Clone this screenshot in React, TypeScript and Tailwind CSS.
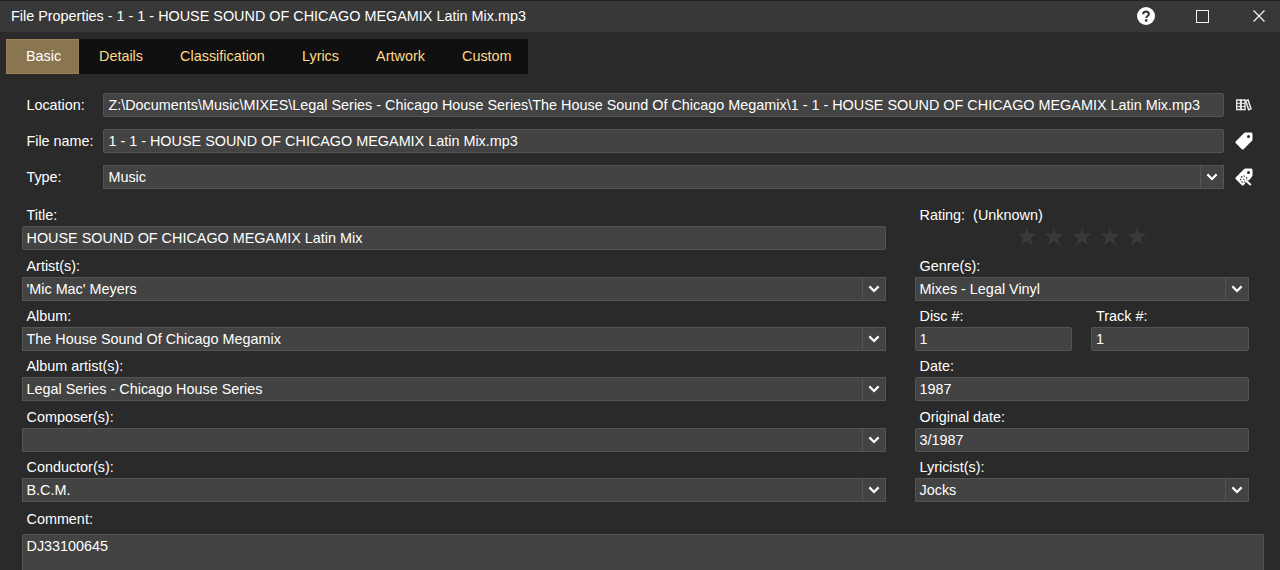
import React from "react";

const tabs = ["Details", "Classification", "Lyrics", "Artwork", "Custom"];

const HelpIcon = () => (
  <svg width="18" height="18" viewBox="0 0 18 18">
    <circle cx="9" cy="9" r="9" fill="#fff" />
    <path
      d="M6.2 7.2C6.2 3.7 11.9 3.7 11.9 7C11.9 8.9 9.2 9 9.2 11"
      fill="none"
      stroke="#333"
      strokeWidth="2"
    />
    <circle cx="9.2" cy="13.4" r="1.3" fill="#333" />
  </svg>
);

const BooksIcon = () => (
  <svg width="16" height="12" viewBox="0 0 16 12" fill="none" stroke="#e6e6e6">
    <rect x="0.7" y="1" width="3.8" height="9.6" strokeWidth="1.5" />
    <rect x="5.2" y="1" width="3.8" height="9.6" strokeWidth="1.5" />
    <path d="M9.8 1.8L12.1 1L15 9.8L12.6 10.7Z" strokeWidth="1.5" />
    <path d="M1 4.4H4M1 7.5H4M6 4.4H9M6 7.5H9" strokeWidth="1" />
  </svg>
);

const TagIcon = () => (
  <svg width="18" height="18" viewBox="0 0 18 18">
    <path
      fillRule="evenodd"
      fill="#fff"
      d="M10.3 0.6H16C16.9 0.6 17.5 1.2 17.5 2.1V7.6Q17.5 8.3 17 8.8L8.8 16.9Q7.7 17.9 6.6 16.9L0.9 11.3Q-0.1 10.2 0.9 9.2L9.1 1.1Q9.6 0.6 10.3 0.6ZM13.5 3A1.5 1.5 0 1 0 13.5 6A1.5 1.5 0 1 0 13.5 3Z"
    />
  </svg>
);

const TagSearchIcon = () => (
  <svg width="18" height="18" viewBox="0 0 18 18">
    <path
      fillRule="evenodd"
      fill="#fff"
      d="M10.3 0.6H16C16.9 0.6 17.5 1.2 17.5 2.1V7.6Q17.5 8.3 17 8.8L8.8 16.9Q7.7 17.9 6.6 16.9L0.9 11.3Q-0.1 10.2 0.9 9.2L9.1 1.1Q9.6 0.6 10.3 0.6ZM13.5 3A1.5 1.5 0 1 0 13.5 6A1.5 1.5 0 1 0 13.5 3Z"
    />
    <path d="M14 11.5L18 8V18H8.8L10.5 15.5Z" fill="#2a2a2a" />
    <circle cx="8.8" cy="11.2" r="3.2" fill="none" stroke="#2a2a2a" strokeWidth="1.2" strokeDasharray="1.5 1.4" />
    <path d="M10.8 12.4L15.8 16.9" stroke="#fff" strokeWidth="2" />
    <path d="M12.4 12L15.6 9.2" stroke="#fff" strokeWidth="2" />
    <path d="M8 10.6L9.6 12.1" stroke="#2a2a2a" strokeWidth="1" />
  </svg>
);

const Star = () => (
  <svg width="20" height="19" viewBox="0 0 20 19" fill="#393939">
    <path d="M10 0L12.3 6.8H19.6L13.8 11.2L16 18.2L10 14L4 18.2L6.2 11.2L0.4 6.8H7.7Z" />
  </svg>
);

type FieldProps = { value: string; select?: boolean };

const Field: React.FC<FieldProps> = ({ value, select }) => (
  <div
    className={
      select
        ? "flex h-6 w-full border border-[#545454] bg-[#434343]"
        : "flex h-6 w-full rounded-[2px] border border-[#545454] bg-[#434343]"
    }
  >
    <div className="flex-1 whitespace-pre pl-1 leading-[22px]">{value}</div>
    {select && (
      <div className="flex w-[23px] items-center justify-center border-l border-[#545454]">
        <svg width="12" height="8" viewBox="0 0 12 8">
          <path d="M1.4 1.4L6 6L10.6 1.4" fill="none" stroke="#fff" strokeWidth="2.2" />
        </svg>
      </div>
    )}
  </div>
);

const LabeledField: React.FC<FieldProps & { label: string }> = ({ label, ...field }) => (
  <div className="h-[50.4px] w-full">
    <div className="h-[22px] pl-[5px] leading-[22px]">{label}</div>
    <Field {...field} />
  </div>
);

const FileRow: React.FC<FieldProps & { label: string; icon: React.ReactNode }> = ({
  label,
  icon,
  ...field
}) => (
  <div className="flex h-6 items-center">
    <div className="w-[77px] shrink-0 leading-6">{label}</div>
    <div className="w-[1120.5px]">
      <Field {...field} />
    </div>
    <div className="flex w-[41px] justify-center">{icon}</div>
  </div>
);

const App: React.FC = () => {
  return (
    <div className="h-[570px] w-[1280px] overflow-hidden bg-[#2a2a2a] font-['Liberation_Sans',Arial,sans-serif] text-[14.4px] text-white">
      {/* Title bar */}
      <header className="flex h-8 items-center border-t border-[#222] bg-[#383838] pb-px pl-[11px] pr-[15px]">
        <h1 className="flex-1 leading-[30px]">
          File Properties - 1 - 1 - HOUSE SOUND OF CHICAGO MEGAMIX Latin Mix.mp3
        </h1>
        <HelpIcon />
        <svg className="ml-[41px]" width="13" height="13" viewBox="0 0 13 13">
          <rect x="0.5" y="0.5" width="12" height="12" fill="none" stroke="#f4f4f4" />
        </svg>
        <svg className="ml-11" width="12" height="12" viewBox="0 0 12 12">
          <path d="M0.5 0.5L11.5 11.5M11.5 0.5L0.5 11.5" stroke="#f4f4f4" strokeWidth="1.2" />
        </svg>
      </header>

      {/* Tabs */}
      <nav className="ml-[6px] mt-[7px] flex h-[35px] w-[522px] bg-[#101010] leading-[34px] text-[#ffda8b]">
        <div className="w-[73px] shrink-0 border border-[#9a8055] bg-[#8a7551] pl-[19px] leading-[32px] text-white">
          Basic
        </div>
        {tabs.map((tab) => (
          <div key={tab} className="shrink-0 pl-5 pr-[17.1px]">
            {tab}
          </div>
        ))}
      </nav>

      {/* File rows */}
      <section className="ml-[26.4px] mt-[19px] flex flex-col gap-3">
        <FileRow
          label="Location:"
          value="Z:\Documents\Music\MIXES\Legal Series - Chicago House Series\The House Sound Of Chicago Megamix\1 - 1 - HOUSE SOUND OF CHICAGO MEGAMIX Latin Mix.mp3"
          icon={<BooksIcon />}
        />
        <FileRow
          label="File name:"
          value="1 - 1 - HOUSE SOUND OF CHICAGO MEGAMIX Latin Mix.mp3"
          icon={<TagIcon />}
        />
        <FileRow label="Type:" value="Music" select icon={<TagSearchIcon />} />
      </section>

      {/* Tag fields */}
      <section className="ml-[21.5px] mt-[15.2px] flex gap-[28.5px]">
        <div className="w-[864.5px]">
          <LabeledField label="Title:" value="HOUSE SOUND OF CHICAGO MEGAMIX Latin Mix" />
          <LabeledField label="Artist(s):" value="'Mic Mac' Meyers" select />
          <LabeledField label="Album:" value="The House Sound Of Chicago Megamix" select />
          <LabeledField label="Album artist(s):" value="Legal Series - Chicago House Series" select />
          <LabeledField label="Composer(s):" value="" select />
          <LabeledField label="Conductor(s):" value="B.C.M." select />
        </div>
        <div className="w-[334.7px]">
          <div className="h-[50.4px]">
            <div className="h-[22px] whitespace-pre pl-[5px] leading-[22px]">Rating:  (Unknown)</div>
            <div className="ml-[102.3px] flex gap-[7.6px] pt-[1px]">
              {[1, 2, 3, 4, 5].map((n) => (
                <Star key={n} />
              ))}
            </div>
          </div>
          <LabeledField label="Genre(s):" value="Mixes - Legal Vinyl" select />
          <div className="flex gap-[19.2px]">
            <div className="w-[157.3px]">
              <LabeledField label="Disc #:" value="1" />
            </div>
            <div className="w-[158.2px]">
              <LabeledField label="Track #:" value="1" />
            </div>
          </div>
          <LabeledField label="Date:" value="1987" />
          <LabeledField label="Original date:" value="3/1987" />
          <LabeledField label="Lyricist(s):" value="Jocks" select />
        </div>
      </section>

      {/* Comment */}
      <section className="ml-[21.5px] w-[1242.5px] pt-[1px]">
        <div className="h-[26.5px] pl-[5px] leading-[22px]">Comment:</div>
        <div className="h-20 rounded-[2px] border border-[#545454] bg-[#434343] pl-1 leading-[22px]">
          DJ33100645
        </div>
      </section>
    </div>
  );
};

export default App;
